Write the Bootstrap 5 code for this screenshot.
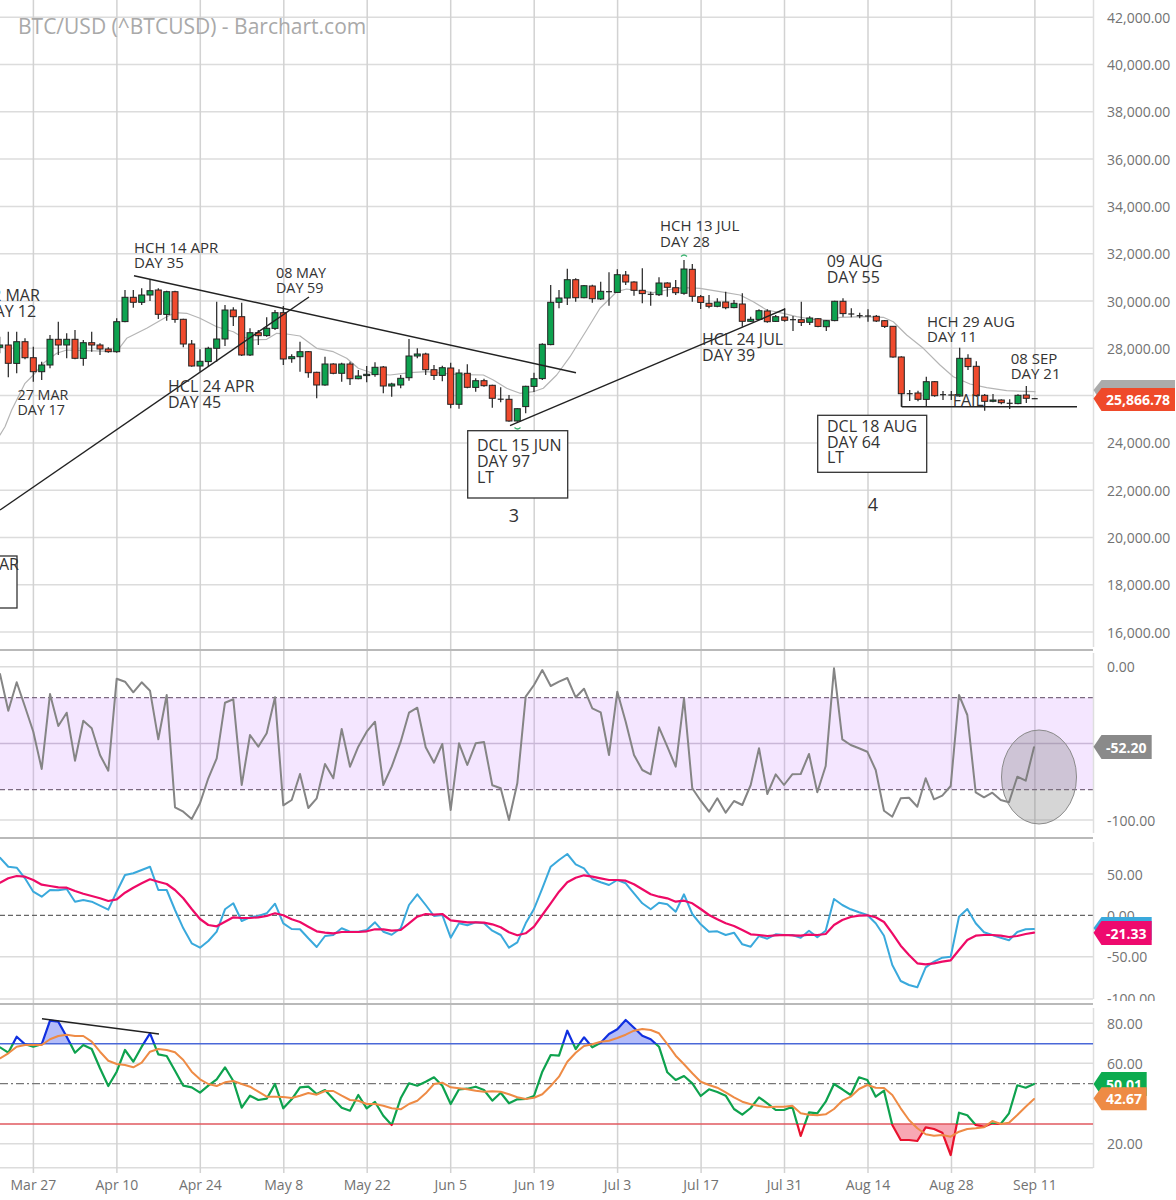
<!DOCTYPE html>
<html lang="en">
<head>
  <title>BTC/USD (^BTCUSD) - Barchart.com</title>
  <meta charset="utf-8">
  <meta name="viewport" content="width=device-width, initial-scale=1">
  <link href="https://cdn.jsdelivr.net/npm/bootstrap@5.3.2/dist/css/bootstrap.min.css" rel="stylesheet">
  <script src="https://cdn.jsdelivr.net/npm/bootstrap@5.3.2/dist/js/bootstrap.bundle.min.js"></script>
  <style>
    body { background: #fff; font-family: "Open Sans", sans-serif; overflow: hidden; }
    .chart-title { top: 13px; left: 18px; font-size: 21px; line-height: 27px; color: #a9a9a9; font-weight: 400; margin: 0; }
    .chart svg { display: block; width: 1176px; }
    svg text { font-family: "Open Sans", sans-serif; }
    .grid { stroke: #dcdcdc; stroke-width: 1.5; }
    .vgrid { stroke: #d2d2d2; stroke-width: 1.5; }
    .axis { stroke: #dedede; stroke-width: 1.5; }
    .sep { stroke: #b9b9b9; stroke-width: 2; }
    .lbl { font-size: 14px; fill: #727272; dominant-baseline: central; }
    .date { font-size: 14px; fill: #727272; text-anchor: middle; dominant-baseline: central; }
    .tag { font-size: 14px; font-weight: 700; fill: #fff; dominant-baseline: central; }
    .ann { font-size: 16px; fill: #333; }
    .ann-sm { font-size: 15px; fill: #333; }
    .ann-xs { font-size: 14.3px; fill: #333; }
    .big { font-size: 18px; fill: #333; text-anchor: middle; }
    .trend { stroke: #222; stroke-width: 1.4; }
    .box { fill: #fff; stroke: #333; stroke-width: 1.3; }
    .wick { stroke: #222; stroke-width: 1.2; }
    .line { fill: none; stroke-linejoin: round; stroke-linecap: round; }
  </style>
</head>
<body>

<div class="chart position-relative d-flex flex-column">
  <h1 class="chart-title position-absolute">BTC/USD (^BTCUSD) - Barchart.com</h1>
  <svg id="main" viewBox="0 0 1176 651" height="651"></svg>
  <svg id="wr" viewBox="0 651 1176 188" height="188"></svg>
  <svg id="macd" viewBox="0 839 1176 162" height="162"></svg>
  <svg id="rsi" viewBox="0 1001 1176 199" height="199">
    <defs>
      <clipPath id="above"><rect x="0" y="1001" width="1094" height="42.7"></rect></clipPath>
      <clipPath id="mid"><rect x="0" y="1043.7" width="1094" height="80.3"></rect></clipPath>
      <clipPath id="below"><rect x="0" y="1124" width="1094" height="50"></rect></clipPath>
    </defs>
    <g id="rsi-body"></g>
  </svg>
</div>

<script>
// points are read off 3x crops, so every series carries its crop origin
function pts(s, ox, oy) {
  return s.trim().split(/\s+/).map(function (p) {
    var a = p.split(',');
    return [ox + a[0] / 3, oy + a[1] / 3];
  });
}
function str(a) { return a.map(function (p) { return p[0].toFixed(1) + ',' + p[1].toFixed(1); }).join(' '); }
function line(x1, y1, x2, y2, cls, extra) {
  return '<line x1="' + x1 + '" y1="' + y1 + '" x2="' + x2 + '" y2="' + y2 + '" class="' + cls + '" ' + (extra || '') + '></line>';
}
function poly(a, color, w) {
  return '<polyline points="' + str(a) + '" class="line" stroke="' + color + '" stroke-width="' + w + '"></polyline>';
}
function text(x, y, t, cls) { return '<text x="' + x + '" y="' + y + '" class="' + cls + '">' + t + '</text>'; }
function vgrid(y1, y2) {
  var s = '';
  for (var k = 0; k < 13; k++) {
    var x = (33.4 + 83.46 * k).toFixed(1);
    s += line(x, y1, x, y2, 'vgrid');
  }
  return s;
}
function tag(y, top, bottom, right, color, t) {
  var d = [[1093.5, y], [1101.5, top], [right, top], [right, bottom], [1101.5, bottom]];
  return '<polygon points="' + str(d) + '" fill="' + color + '"></polygon>' + (t ? text(1106, y + 0.5, t, 'tag') : '');
}

/* ---- price panel ---- */
var candles1 = `-1,350,400,375,382,g 25,335,472,375,430,r 50,335,460,365,430,g 75,355,418,365,413,r 100,380,485,413,455,r 125,425,480,435,455,g
150,345,445,358,435,g 175,305,405,358,375,r 200,340,415,358,375,g 225,330,418,358,415,r 250,360,437,368,415,g 275,335,395,368,375,r 300,370,405,375,387,r 325,382,398,387,395,r
350,295,398,305,395,g 375,210,307,232,305,g 400,210,263,232,247,r 425,205,255,225,247,g 450,178,243,212,225,g 475,205,297,210,283,r 500,212,302,215,283,g 525,212,308,215,298,r
550,296,382,298,372,r 575,360,440,372,438,r 600,388,455,424,438,g 625,380,440,385,425,g 650,245,425,357,385,g 675,255,378,270,357,g 700,262,318,270,290,r 725,248,408,290,405,r
750,325,408,338,405,g 775,330,375,338,347,r 800,292,350,325,347,g 825,270,330,278,325,g 850,258,435,278,417,r 875,403,428,410,416,g 900,365,455,395,410,g 925,393,473,395,458,r
950,455,535,457,495,r 975,410,497,432,495,g 1000,430,463,432,460,r 1025,428,485,432,460,g 1050,425,495,432,476,r 1075,450,478,468,476,g 1100,438,487,463,467,g 1125,427,470,442,464,g
1150,438,520,441,498,r 1175,488,530,492,498,g`;
var candles2 = `2,465,505,475,495,g 27,357,482,408,473,g 52,385,415,402,408,g 77,398,465,402,449,r 102,435,480,449,466,r 127,437,484,443,466,g 152,428,565,444,553,r 177,448,566,459,553,g
202,433,505,460,502,r 227,475,515,482,502,g 252,476,500,482,497,r 277,494,563,496,535,r 302,502,547,537,538,k 327,525,605,538,603,r 352,565,605,566,603,g 377,497,580,499,560,g
402,458,516,476,499,g 427,370,480,373,476,g 452,195,376,247,374,g 477,210,265,234,247,g 502,146,255,179,234,g 527,175,245,179,233,r 552,195,235,197,233,g 577,194,248,198,236,r
602,185,240,214,237,g 627,157,257,214,216,k 652,148,218,164,217,g 677,153,195,165,186,r 702,184,227,186,211,r 727,145,250,211,221,r 752,215,257,222,224,k 777,172,228,189,224,g
802,187,230,189,202,r 827,180,225,203,218,r 852,120,224,147,220,g 877,132,245,148,229,r 902,225,267,230,247,r 927,225,265,250,259,r 952,235,262,246,259,g 977,215,268,246,263,r
1002,240,265,250,263,g 1027,220,320,252,304,r 1052,290,306,298,304,g 1077,268,300,272,298,g 1102,268,308,273,305,r 1127,285,306,290,304,g`;
var candles3 = `14,205,245,231,241,r 39,228,273,238,240,k 64,185,258,239,247,r 89,229,255,234,247,g 114,234,262,236,259,r 139,240,273,242,260,g 164,182,244,184,242,g 189,175,230,184,221,r
214,205,232,221,223,k 239,218,235,226,228,k 264,208,245,227,229,k 289,225,246,229,243,r 314,240,264,242,259,r 339,258,353,259,351,r 364,349,500,351,461,r 389,450,483,460,462,k
414,452,484,459,478,r 439,410,500,425,478,g 464,423,470,425,467,r 489,453,480,463,465,k 514,453,480,464,466,k 539,323,470,355,468,g 564,343,390,355,380,r 589,364,470,379,467,r
614,462,512,466,484,r 639,462,487,480,484,g 664,478,493,480,488,r 689,478,507,489,491,k 714,463,493,466,491,g 739,438,489,465,475,r 764,475,477,475,477,k`;

function candles(s, ox, oy) {
  var out = '';
  s.trim().split(/\s+/).forEach(function (c) {
    var a = c.split(',');
    var x = (ox + a[0] / 3).toFixed(1);
    var hi = oy + a[1] / 3, lo = oy + a[2] / 3, top = oy + a[3] / 3, bot = oy + a[4] / 3;
    out += line(x, hi.toFixed(1), x, lo.toFixed(1), 'wick');
    if (a[5] == 'k') {
      out += line(x - 3, ((top + bot) / 2).toFixed(1), +x + 3, ((top + bot) / 2).toFixed(1), 'wick');
    } else {
      var fill = a[5] == 'g' ? '#0da24f' : '#ef4a2d';
      out += '<rect x="' + (x - 3) + '" y="' + top.toFixed(1) + '" width="6" height="' + (bot - top).toFixed(1) + '" fill="' + fill + '" stroke="#222" stroke-width="1"></rect>';
    }
  });
  return out;
}

var sma = pts(`0,645 15,620 35,570 55,530 75,490 100,465 130,430 170,400 200,390 260,392 350,395 380,355 440,325 500,290 525,278 560,280 600,295 650,320 700,335 725,350 760,360 800,358 830,340 860,342 900,348 950,385 1000,395 1040,415 1075,445 1125,462 1170,465`, 0, 220)
  .concat(pts(`30,458 80,455 130,460 180,464 250,465 280,480 320,505 360,520 400,515 430,505 470,465 510,410 560,330 600,265 650,215 680,207 720,213 760,218 800,210 850,203 900,205 960,215 1020,225 1060,245 1100,270`, 400, 220))
  .concat(pts(`0,218 50,230 100,238 150,240 180,232 250,230 310,232 340,245 380,285 430,325 480,375 520,410 570,432 620,443 680,452 765,455`, 780, 240));

var h = '', prices = ['42,000.00', '40,000.00', '38,000.00', '36,000.00', '34,000.00', '32,000.00', '30,000.00', '28,000.00', '', '24,000.00', '22,000.00', '20,000.00', '18,000.00', '16,000.00'];
prices.forEach(function (p, i) {
  var y = (17.2 + 47.3 * i).toFixed(1);
  h += line(0, y, 1093, y, 'grid');
  if (p) h += text(1107, y, p, 'lbl');
});
h += vgrid(0, 651);
h += line(1093.5, 0, 1093.5, 647, 'axis');
h += poly(sma, '#b5b5b5', 1.2);
h += candles(candles1, 0, 220) + candles(candles2, 400, 220) + candles(candles3, 780, 240);
h += line(134, 275.7, 576, 372.7, 'trend') + line(0, 510, 309, 297, 'trend') + line(510, 425.7, 785, 309, 'trend');
h += line(901.7, 393, 901.7, 406.7, 'trend') + line(901.7, 406.7, 1077, 406.7, 'trend');
// turning point markers
h += '<path d="M681 256.5q3-3 6 0" fill="none" stroke="#3cb371" stroke-width="1.2"></path>';
h += '<path d="M514.5 427.5q3 3 6 0" fill="none" stroke="#3cb371" stroke-width="1.2"></path>';

[[-17, 300.7, 316.7, '22 MAR', 'DAY 12', 'ann'], [17.5, 400, 415, '27 MAR', 'DAY 17', 'ann-xs'], [134, 252.7, 268, 'HCH 14 APR', 'DAY 35', 'ann-sm'],
 [276, 278, 292.5, '08 MAY', 'DAY 59', 'ann-xs'], [168, 391.7, 407.7, 'HCL 24 APR', 'DAY 45', 'ann'], [660, 231, 246.7, 'HCH 13 JUL', 'DAY 28', 'ann-sm'],
 [702, 345, 360.7, 'HCL 24 JUL', 'DAY 39', 'ann'], [826.7, 267.3, 283, '09 AUG', 'DAY 55', 'ann'], [927, 326.7, 341.7, 'HCH 29 AUG', 'DAY 11', 'ann-sm'],
 [1010.7, 364, 379.3, '08 SEP', 'DAY 21', 'ann-sm']].forEach(function (a) {
  h += text(a[0], a[1], a[3], a[5]) + text(a[0], a[2], a[4], a[5]);
});
h += text(952.7, 406, 'FAIL', 'ann');
h += '<rect x="467.7" y="430.7" width="100" height="67.3" class="box"></rect>';
h += text(477, 451, 'DCL 15 JUN', 'ann') + text(477, 467, 'DAY 97', 'ann') + text(477, 483, 'LT', 'ann');
h += '<rect x="817.7" y="415.3" width="109" height="57" class="box"></rect>';
h += text(827, 431.7, 'DCL 18 AUG', 'ann') + text(827, 447.7, 'DAY 64', 'ann') + text(827, 463.3, 'LT', 'ann');
h += '<rect x="-20" y="556" width="37" height="52" class="box"></rect>' + text(-1, 570, 'AR', 'ann');
h += text(514, 522, '3', 'big') + text(873, 511, '4', 'big');
h += tag(390, 380, 403, 1175, '#ababab', '');
h += tag(398.5, 388, 411, 1175, '#ef4a2a', '25,866.78');
h += line(0, 650, 1093, 650, 'sep');
document.getElementById('main').innerHTML = h;

/* ---- Williams %R panel ---- */
var wr = pts(`0,102 25,212 50,127 75,200 100,275 125,387 150,162 175,258 200,218 225,362 250,242 275,265 300,345 325,392 350,116 375,125 400,157 425,127 450,152 475,298 500,165 525,502 550,515 575,537 600,490 625,415 650,355 675,188 700,178 725,435 750,285 775,320 800,280 825,172 850,496 875,480 900,402 925,504 950,475 975,372 1000,415 1025,267 1050,380 1075,320 1100,275 1125,245 1150,435 1175,380`, 0, 640)
  .concat(pts(`2,305 27,218 52,203 77,322 102,368 127,312 152,510 177,310 202,375 227,310 252,306 277,436 302,445 327,540 352,430 377,170 402,135 427,90 452,138 477,125 502,114 527,172 552,146 577,205 602,217 627,345 652,155 677,245 702,345 727,390 752,403 777,262 802,320 827,380 852,175 877,445 902,482 927,515 952,475 977,518 1002,483 1027,495 1052,435 1077,325 1102,462 1127,403`, 400, 640))
  .concat(pts(`12,435 37,403 62,402 87,342 112,457 137,378 162,85 187,298 212,315 237,325 262,335 287,390 312,512 337,530 362,475 387,473 412,500 437,415 462,478 487,467 512,438 537,165 562,225 587,457 612,472 637,458 662,480 687,487 712,410 737,422 762,322`, 780, 640));
h = line(0, 666.7, 1093, 666.7, 'grid') + line(0, 820, 1093, 820, 'grid') + vgrid(651, 839);
h += '<rect x="0" y="697.7" width="1093" height="92" fill="rgba(200,130,255,.2)"></rect>';
h += line(0, 743.5, 1093, 743.5, '', 'stroke="#c9b7d8" stroke-width="1.3"');
h += line(0, 697.7, 1093, 697.7, '', 'stroke="#7b6a80" stroke-width="1.3" stroke-dasharray="5 3"');
h += line(0, 789.7, 1093, 789.7, '', 'stroke="#7b6a80" stroke-width="1.3" stroke-dasharray="5 3"');
h += line(1093.5, 653, 1093.5, 833, 'axis');
h += text(1107, 666.5, '0.00', 'lbl') + text(1107, 820, '-100.00', 'lbl');
h += poly(wr, '#858585', 2);
h += '<ellipse cx="1039" cy="777" rx="37.5" ry="47" fill="rgba(120,120,120,.3)" stroke="#8a8a8a" stroke-width="1"></ellipse>';
h += tag(746.7, 735, 759, 1151.7, '#8a8a8a', '-52.20');
h += line(0, 838, 1093, 838, 'sep');
document.getElementById('wr').innerHTML = h;

/* ---- MACD panel ---- */
var fast = pts(`0,53 25,80 50,83 75,115 100,155 125,170 150,150 175,151 200,147 225,185 250,180 275,185 300,197 325,209 350,155 375,105 400,100 425,90 450,80 475,150 500,150 525,210 550,265 575,310 600,323 625,303 650,275 675,208 700,190 725,243 750,232 775,228 800,220 825,191 850,250 875,267 900,268 925,295 950,321 975,288 1000,285 1025,265 1050,275 1075,275 1100,270 1125,247 1150,275 1175,284`, 0, 840)
  .concat(pts(`2,265 27,195 52,163 77,195 102,228 127,225 152,293 177,250 202,256 227,247 252,250 277,272 302,285 327,323 352,307 377,250 402,207 427,145 452,80 477,60 502,42 527,73 552,85 577,117 602,127 627,135 652,120 677,130 702,160 727,190 752,208 777,188 802,193 827,215 852,163 877,222 902,253 927,275 952,274 977,285 1002,278 1027,313 1052,320 1077,288 1102,296 1127,283`, 400, 840))
  .concat(pts(`12,285 37,285 62,293 87,272 112,292 137,272 162,177 187,195 212,208 237,217 262,225 287,250 312,287 337,375 362,423 387,435 412,442 437,382 462,365 487,353 512,350 537,230 562,207 587,250 612,277 637,285 662,293 687,301 712,276 737,268 762,267`, 780, 840));
var slow = pts(`0,128 25,115 50,108 75,110 100,120 125,134 150,138 175,142 200,143 225,153 250,161 275,168 300,175 325,183 350,178 375,158 400,143 425,130 450,118 475,125 500,132 525,150 550,175 575,207 600,237 625,255 650,259 675,245 700,232 725,234 750,234 775,232 800,228 825,220 850,226 875,238 900,246 925,260 950,274 975,278 1000,280 1025,276 1050,276 1075,276 1100,274 1125,268 1150,268 1175,272`, 0, 840)
  .concat(pts(`2,270 27,250 52,230 77,222 102,224 127,222 152,241 177,244 202,247 227,247 252,248 277,253 302,262 327,277 352,286 377,280 402,260 427,225 452,190 477,155 502,127 527,113 552,106 577,110 602,115 627,120 652,120 677,122 702,133 727,148 752,163 777,170 802,175 827,185 852,182 877,190 902,207 927,225 952,238 977,250 1002,258 1027,270 1052,283 1077,285 1102,288 1127,286`, 400, 840))
  .concat(pts(`12,285 37,286 62,287 87,284 112,285 137,282 162,255 187,240 212,231 237,227 262,226 287,232 312,246 337,280 362,317 387,345 412,370 437,373 462,370 487,365 512,361 537,330 562,300 587,287 612,285 637,285 662,287 687,291 712,288 737,282 762,278`, 780, 840));
h = line(0, 874, 1093, 874, 'grid') + line(0, 956.7, 1093, 956.7, 'grid') + line(0, 999, 1093, 999, 'grid') + vgrid(839, 1001);
h += line(0, 915.3, 1093, 915.3, '', 'stroke="#666" stroke-width="1.2" stroke-dasharray="5 3"');
h += line(1093.5, 842, 1093.5, 999, 'axis');
h += text(1107, 874, '50.00', 'lbl') + text(1107, 915, '0.00', 'lbl') + text(1107, 956.7, '-50.00', 'lbl') + text(1107, 998, '-100.00', 'lbl');
h += poly(fast, '#3aa9dc', 2) + poly(slow, '#ee0a66', 2.2);
h += tag(928, 917, 940, 1151.7, '#3aa9dc', '');
h += tag(932.7, 921, 945, 1151.7, '#ee0a6e', '-21.33');
document.getElementById('macd').innerHTML = h;

/* ---- RSI panel ---- */
var rsi = pts(`0,142 25,158 50,110 75,133 100,140 125,133 150,62 175,65 200,110 225,158 250,135 275,147 300,205 325,258 350,215 375,150 400,185 425,140 450,100 475,163 500,168 525,212 550,257 575,262 600,278 625,257 650,238 675,202 700,243 725,323 750,287 775,300 800,296 825,252 850,325 875,298 900,262 925,260 950,282 975,270 1000,297 1025,323 1050,332 1075,285 1100,325 1125,306 1150,347 1175,375`, 0, 1000)
  .concat(pts(`2,295 27,250 52,257 77,245 102,232 127,257 152,312 177,268 202,266 227,260 252,270 277,302 302,278 327,310 352,298 377,297 402,288 427,215 452,165 477,167 502,92 527,147 552,112 577,142 602,128 627,102 652,88 677,60 702,83 727,107 752,118 777,140 802,217 827,240 852,228 877,250 902,288 927,268 952,276 977,287 1002,327 1027,344 1052,324 1077,292 1102,310 1127,330`, 400, 1000))
  .concat(pts(`12,330 37,320 62,408 87,337 112,340 137,305 162,252 187,268 212,285 237,232 262,240 287,290 312,272 337,375 362,420 387,420 412,423 437,382 462,387 487,398 512,465 537,338 562,346 587,375 612,380 637,370 662,372 687,340 712,256 737,263 762,252`, 780, 1000));
var avg = pts(`0,175 25,160 50,140 75,135 100,135 125,135 150,118 175,108 200,104 225,108 250,108 275,125 300,155 325,182 350,192 375,195 400,202 425,188 450,155 475,147 500,150 525,157 550,180 575,215 600,238 625,252 650,258 675,247 700,243 725,252 750,260 775,275 800,290 825,290 850,291 875,294 900,287 925,279 950,284 975,273 1000,273 1025,287 1050,300 1075,302 1100,312 1125,312 1150,317 1175,325`, 0, 1000)
  .concat(pts(`2,328 27,312 52,302 77,280 102,252 127,248 152,262 177,265 202,268 227,272 252,275 277,274 302,275 327,283 352,292 377,297 402,293 427,283 452,258 477,230 502,185 527,158 552,138 577,133 602,125 627,122 652,114 677,104 702,92 727,87 752,90 777,100 802,132 827,167 852,193 877,220 902,245 927,255 952,263 977,277 1002,292 1027,305 1052,313 1077,318 1102,322 1127,320`, 400, 1000))
  .concat(pts(`12,320 37,317 62,340 87,344 112,346 137,343 162,327 187,302 212,290 237,267 262,255 287,263 312,264 337,285 362,325 387,360 412,385 437,403 462,407 487,405 512,410 537,395 562,387 587,385 612,382 637,363 662,372 687,368 712,345 737,320 762,297`, 780, 1000));
h = '';
[1023.3, 1063.3, 1104, 1143.7, 1167.7].forEach(function (y) { h += line(0, y, 1093, y, 'grid'); });
h += vgrid(1001, 1173);
h += line(1093.5, 1008, 1093.5, 1168, 'axis');
h += '<polygon points="' + str(pts('125,131 150,62 175,65 200,110 212,131', 0, 1000)) + '" fill="#b4bcf8"></polygon>';
h += '<polygon points="' + str(pts('607,131 627,102 652,88 677,60 702,83 727,107 752,118 770,131', 400, 1000)) + '" fill="#b4bcf8"></polygon>';
h += '<polygon points="' + str(pts('337,372 362,420 387,420 412,423 437,382 462,387 487,398 512,465 530,372', 780, 1000)) + '" fill="#f8a8b4"></polygon>';
h += line(0, 1043.7, 1093, 1043.7, '', 'stroke="#4a68d8" stroke-width="1.4"');
h += line(0, 1083.7, 1093, 1083.7, '', 'stroke="#777" stroke-width="1.3" stroke-dasharray="8 3 2 3"');
h += line(0, 1124, 1093, 1124, '', 'stroke="#e0585f" stroke-width="1.4"');
h += text(1107, 1023.3, '80.00', 'lbl') + text(1107, 1063, '60.00', 'lbl') + text(1107, 1143.7, '20.00', 'lbl');
h += '<g clip-path="url(#mid)">' + poly(rsi, '#0ea24e', 2.2) + '</g>';
h += '<g clip-path="url(#above)">' + poly(rsi, '#1030e0', 2.2) + '</g>';
h += '<g clip-path="url(#below)">' + poly(rsi, '#e8112d', 2.2) + '</g>';
h += poly(avg, '#ee8b45', 2);
h += line(42, 1018.7, 159, 1034, 'trend');
h += tag(1084, 1072, 1096, 1146.7, '#0cab4f', '50.01');
h += tag(1098.3, 1087.3, 1110.3, 1146.7, '#ee8b45', '42.67');
h += line(0, 1004, 1093, 1004, 'sep');
['Mar 27', 'Apr 10', 'Apr 24', 'May 8', 'May 22', 'Jun 5', 'Jun 19', 'Jul 3', 'Jul 17', 'Jul 31', 'Aug 14', 'Aug 28', 'Sep 11'].forEach(function (d, k) {
  h += text((33.4 + 83.46 * k).toFixed(1), 1184, d, 'date');
});
document.getElementById('rsi-body').innerHTML = h;
</script>

</body>
</html>
